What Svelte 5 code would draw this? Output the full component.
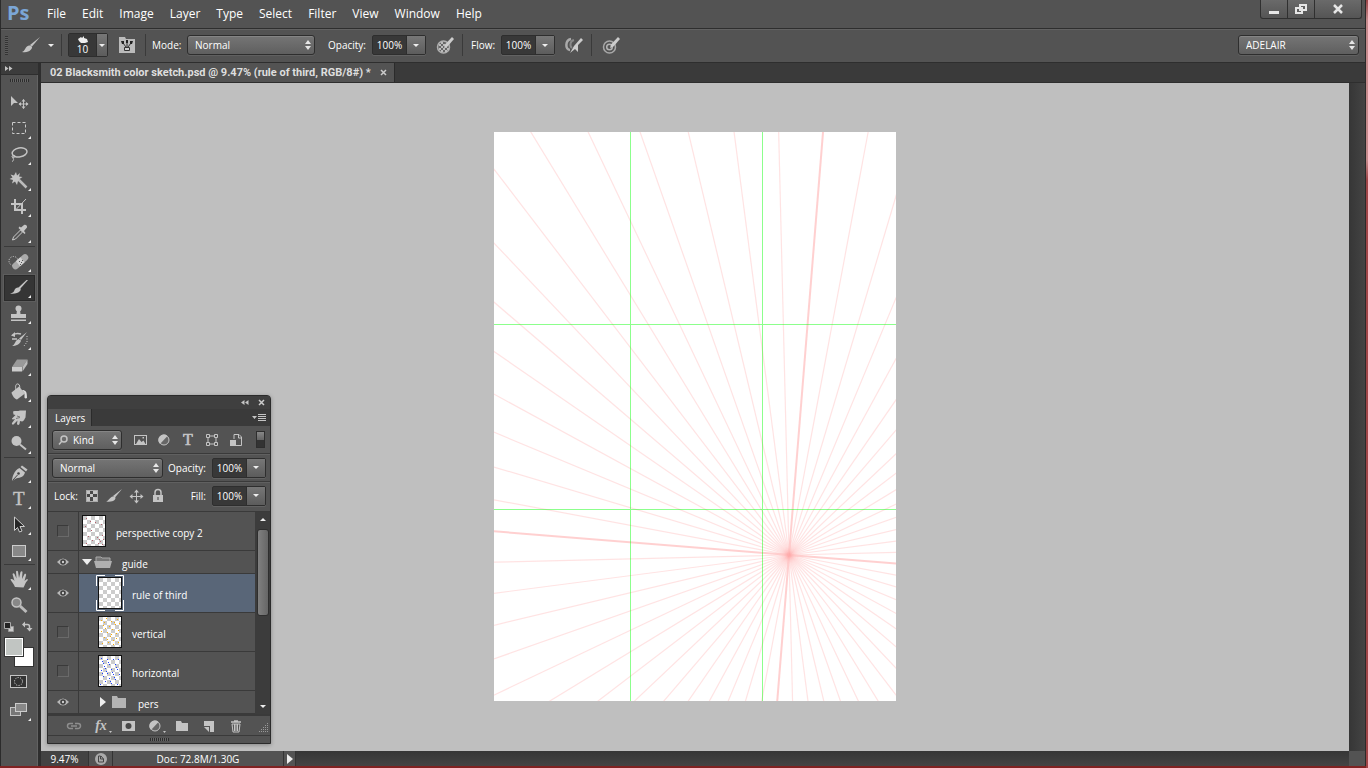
<script>
const menus = ['File', 'Edit', 'Image', 'Layer', 'Type', 'Select', 'Filter', 'View', 'Window', 'Help'];

// each drawing lives in a 31 x 26 cell, x runs from 4 to 35
const toolGroups = [
    [
        { name: 'Move', single: true, art: '<path d="M11 6v10l3-3h4z"/><path d="M23.500 9.500v9M19 14h9" stroke="#c4c4c4"/><path d="M23.500 9l2 2.500h-4zM23.500 19l2-2.500h-4zM18.500 14l2.500-2v4zM28.500 14l-2.500-2v4z"/>' },
        { name: 'Marquee', art: '<rect x="12.500" y="6.500" width="13" height="11" fill="none" stroke="#ccc" stroke-dasharray="3 2"/>' },
        { name: 'Lasso', art: '<ellipse cx="19.500" cy="10.500" rx="7.500" ry="4.500" transform="rotate(-10 19 10)" fill="none" stroke="#c4c4c4" stroke-width="1.500"/><path d="M12.500 13.500c-2 2 2 3 2.500 1s-3-1-2 1.500 1 2-1 3.500" fill="none" stroke="#c4c4c4"/>' },
        { name: 'Magic wand', art: '<path d="M16 4l1 3.500L20 5l-1 3.500 3.500.500-3 2 2 3-3.500-1L17 17l-2-3.500-3 2 1-3.500-3.500-1 3-1.500-2-3 3.500 1z"/><path d="M19 12l7.500 7.500" stroke="#bbb" stroke-width="2.500"/>' },
        { name: 'Crop', art: '<path d="M15 5v11h11M11 10h11v10" fill="none" stroke="#c4c4c4" stroke-width="2"/><path d="M16 15.500L26 5" stroke="#c4c4c4"/>' },
        { name: 'Eyedropper', art: '<path d="M12.500 20l1-3 7-7 2 2-7 7z" fill="#555" stroke="#ccc"/><path d="M18.500 8l6 6 1-1-1.500-2 3-3.500c.5-2-1.500-3.500-3-2.500l-3 2.500-1.500-1z"/>' }
    ],
    [
        { name: 'Healing brush', art: '<circle cx="13.500" cy="12" r="4.500" fill="none" stroke="#ddd" stroke-dasharray="1 1.500"/><path d="M15.500 17L25 8.500" stroke="#aaa" stroke-width="6.500" stroke-linecap="round"/><path d="M18 14.800l4.500-4" stroke="#d2d2d2" stroke-width="6.500"/><path d="M19 12h1v1h-1zM21 13h1v1h-1zM20 15h1v1h-1zM22 11h1v1h-1z" fill="#555"/>' },
        { name: 'Brush', active: true, art: '<path d="M28 5l-8 9-1.500-1.500 8-7.500z"/><path d="M18 12.500c2.500 0 3.500 2 2 3.500-2 2.500-6 3-10 2.500 3-.5 4-1.500 4.500-3.500.500-1.500 2-2.500 3.500-2.500z"/>' },
        { name: 'Clone stamp', art: '<circle cx="18.500" cy="7.500" r="3"/><path d="M17 9h3l.500 4h5.500v4H11v-4h5.500zM11 18.500h15v1.500H11z"/>' },
        { name: 'History brush', art: '<path d="M27 5l-6 8-2-1.500zM18.500 12l2.500 1.500c-1 4-5 5.500-9 5.500 3-1 3-5.500 6.500-7z"/><path d="M13 8c2.500-2 5-2 8-1M12 12h5" fill="none" stroke="#c4c4c4" stroke-width="1.500"/><path d="M11 8.500l4-3.500v5z"/><path d="M27 9v6l-3 4" fill="none" stroke="#ccc" stroke-dasharray="1 1.500"/>' },
        { name: 'Eraser', art: '<path d="M12 14l5-7.500h10.500L22.500 14z" fill="#999"/><path d="M12 14h10v4.500H12z" fill="#ccc"/><path d="M22.500 14l5-7.500V11l-5 7.500z" fill="#bbb"/>' },
        { name: 'Paint bucket', art: '<path d="M11.500 13.500l7.500-6 6 7-8 6c-2 0-5-4-5.500-7z"/><path d="M16 11c-1-4 0-6.500 2-6s2 3 1.500 6" fill="none" stroke="#ccc"/><path d="M22 11c4 0 5 2 5 8-1.500 1-3 0-2.500-1.500V14z" fill="#ddd"/>' },
        { name: 'Smudge', art: '<path d="M13 6.500c2-1 5 0 7-1h6l-.5 7c-1 1-1 3.500-3.500 4l-2-.5-.5 3c-1 1.500-2.500 1-2.500-.5l.5-3-4 4c-1 .500-2-.5-1.500-1.500l3-4-2 .500c-1 0-1.500-1-.5-1.500l3-3-2-.5z"/><path d="M17 11l3 1M16 13.500l4-1" stroke="#777"/>' },
        { name: 'Dodge', art: '<circle cx="16.500" cy="10" r="5"/><path d="M20 13.500l6 5" stroke="#c4c4c4" stroke-width="2"/>' }
    ],
    [
        { name: 'Pen', art: '<path d="M22 5.500l5.500 4-1.500 2-5.500-4.500zM19.500 8l5.500 4.500c-1 4-4 5-9 6l-4 2.500c0-3 2-11 7.500-13z"/><path d="M12.500 20.500l5-5.500" stroke="#444"/><circle cx="18.500" cy="13.500" r="1.300" fill="#444"/>' },
        { name: 'Type', art: '<text x="13" y="19" font-family="Liberation Serif, serif" font-size="19" stroke="#c4c4c4" stroke-width=".4">T</text>' },
        { name: 'Path selection', art: '<path d="M14.500 5v13.500l3-3 2 4.500 2.500-1-2-4.500h4.500z" fill="#252525" stroke="#ccc"/>' },
        { name: 'Rectangle', art: '<rect x="12.500" y="7.500" width="13" height="11" fill="#888" stroke="#ccc"/>' }
    ],
    [
        { name: 'Hand', art: '<path d="M15 20c-1-3-3.500-5-4.500-7.500 1-1 3 0 4 1.500l-2-7c.5-1 1.500-1 2 0l2 4.500-.500-7c.500-1 1.500-1 2 0l1 6.500L20.500 5c.500-1 2-1 2 0L22 12l2.500-5c1-.500 2 0 1.500 1.500L24.500 14l2.500-2c1 0 1 1 .5 1.500C25 16 25 18 23.500 20.500z"/>' },
        { name: 'Zoom', single: true, art: '<circle cx="16.500" cy="9.500" r="4.500" fill="#888" stroke="#c4c4c4" stroke-width="1.500"/><path d="M20 13l6.500 6" stroke="#bbb" stroke-width="3"/>' }
    ]
];

// drawn on a 16 x 16 grid
const icons = {
    image: '<rect x="2.500" y="3.500" width="12" height="9" fill="none" stroke="#c4c4c4"/><path d="M4 12l3-5 2.500 3 2-1.500 2 3.500z"/><rect x="10.500" y="5" width="1.500" height="1.500"/>',
    adjust: '<circle cx="8" cy="8" r="5" fill="#666" stroke="#c4c4c4"/><path d="M4 12A5 5 0 0 1 11.500 4z"/>',
    type: '<text x="3" y="13" font-family="Liberation Serif, serif" font-size="16" stroke="#c4c4c4" stroke-width=".6">T</text>',
    shape: '<path d="M4 4h8v8H4z" fill="none" stroke="#c4c4c4"/><path d="M2.500 2.500h3v3h-3zM10.500 2.500h3v3h-3zM2.500 10.500h3v3h-3zM10.500 10.500h3v3h-3z" fill="#535353" stroke="#c4c4c4"/>',
    smart: '<path d="M6 7V2.500h5l2.500 2.500v8.500H8M10.500 3v3h3" fill="none" stroke="#c4c4c4"/><path d="M2 8h6v6H2z"/>',
    grid: '<path d="M2 2h12v12H2z" fill="#aaa"/><path d="M6 3h3v3H6zM3 6h3v3H3zM9 6h4v3H9zM6 9h3v4H6z" fill="#484848"/><path d="M3 3h3v3H3zM9 3h4v3H9zM6 6h3v3H6zM3 9h3v4H3zM9 9h4v4H9z"/>',
    brush: '<path d="M16 1L9 9.500 7 8z"/><path d="M7 8.500c3 0 3 2 1.500 3.500C7 13.500 4 14 0 13.500c3-.500 3.500-4.500 7-5z"/>',
    move: '<path d="M8.500 3v11M3 8.500h11" stroke="#c4c4c4"/><path d="M8.500 1.500l2.500 3H6zM8.500 15.500l2.500-3H6zM1.500 8.500l3-2.500v5zM15.500 8.500l-3-2.500v5z"/>',
    lock: '<path d="M5 7V4.500a3 3 0 0 1 6 0V7" fill="none" stroke="#c4c4c4" stroke-width="1.500"/><path d="M3 7h10v7H3z"/><path d="M7.500 9h1v3h-1z" fill="#444"/>',
    link: '<path d="M7 10.500H4a2.500 2.500 0 0 1 0-5h3M9 5.500h3a2.500 2.500 0 0 1 0 5H9M5 8h6" fill="none" stroke="#8e8e8e" stroke-width="1.500"/>',
    mask: '<path d="M2 3h13v10H2z"/><circle cx="8.500" cy="8" r="3" fill="#484848"/>',
    folder: '<path d="M2 3h5l1 2h6v8H2z"/>',
    sheet: '<path d="M3 3h10v11H9V8H3z"/><path d="M3 9h5v5z"/>',
    trash: '<path d="M3 4h10M6 3h4" stroke="#c4c4c4" stroke-width="1.500"/><path d="M4 6h8l-1 8H5z" fill="none" stroke="#c4c4c4"/><path d="M6.500 6v7M8 6v7M9.500 6v7" stroke="#c4c4c4"/>',
    brushPanel: '<path d="M0 0h6l1 2h9v14H0z" fill="#bbb"/><path d="M5.500 10.500h5v3h-5z" fill="#ccc" stroke="#333"/><path d="M4 6l3 4M8 5v5M12 6l-3 4" stroke="#333"/><path d="M2 4h3v3H3zM7 3h2v3H7zM11 4h3l-1 3h-2z" fill="#222"/>'
};

// pen overlays of the options bar, 18 x 17
const pens = {
    opacity: '<circle cx="7.500" cy="10" r="6" fill="#666" stroke="#b0b0b0" stroke-width="1.500"/><path d="M5 5h2v2H5zM3 7h2v2H3zM7 7h2v2H7zM5 9h2v2H5zM9 9h2v2H9zM3 11h2v2H3zM7 11h2v2H7zM11 11h2v2h-2zM5 13h2v2H5zM9 13h2v2H9z" fill="#bbb"/><path d="M16 0l2 2-6.500 7.500L8 11l1-3.500z" fill="#ccc"/>',
    airbrush: '<path d="M6 2C0 3 0 13 5 13" fill="none" stroke="#aaa" stroke-width="2.500"/><path d="M9 3C5 4 4.500 9 7 11" fill="none" stroke="#888" stroke-width="2"/><path d="M16 1l2 2-5 5v7l-3-3-5 4 4-7z" fill="#ccc"/>',
    size: '<circle cx="7.500" cy="10" r="6" fill="none" stroke="#a8a8a8" stroke-width="1.500"/><circle cx="7.500" cy="10" r="2.800" fill="none" stroke="#b4b4b4" stroke-width="1.500"/><path d="M16 0l2 2-6.500 7.500L8 11l1-3.500z" fill="#ccc"/>'
};

const filters = [
    ['image', 'Pixel layers'],
    ['adjust', 'Adjustment layers'],
    ['type', 'Type layers'],
    ['shape', 'Shape layers'],
    ['smart', 'Smart objects']
];
const locks = [
    ['grid', 'Lock transparent pixels'],
    ['brush', 'Lock image pixels'],
    ['move', 'Lock position'],
    ['lock', 'Lock all']
];
const actions = [
    ['link', 'Link layers'],
    ['fx', 'Layer style'],
    ['mask', 'Add mask'],
    ['adjust', 'New adjustment layer'],
    ['folder', 'New group'],
    ['sheet', 'New layer'],
    ['trash', 'Delete layer']
];

let layers = [
    { name: 'perspective copy 2', visible: false, dots: '#b5606c', pts: [[3, 2], [7, 5], [2, 10], [12, 6], [18, 8], [8, 14], [5, 20], [14, 21], [16, 23], [19, 19], [17, 25], [15, 27], [20, 23], [3, 27], [9, 24], [19, 28]] },
    { name: 'guide', visible: true, group: true, open: true },
    { name: 'rule of third', visible: true, child: true, selected: true, pts: [] },
    { name: 'vertical', visible: false, child: true, dots: '#ffae00', pts: [[2, 3], [7, 1], [12, 4], [18, 2], [4, 8], [10, 9], [16, 7], [2, 14], [8, 15], [13, 12], [19, 13], [5, 20], [11, 19], [17, 21], [3, 26], [9, 25], [14, 27], [19, 25], [5, 5], [15, 5], [20, 6], [6, 11], [12, 17], [17, 16], [8, 22], [14, 23]] },
    { name: 'horizontal', visible: false, child: true, dots: '#1c3fff', pts: [[2, 2], [4, 7], [6, 12], [8, 17], [10, 22], [12, 27], [8, 3], [10, 8], [12, 13], [14, 18], [16, 23], [18, 28], [14, 3], [16, 8], [18, 13], [20, 18], [2, 14], [4, 20], [6, 25], [1, 28], [19, 3], [3, 5], [5, 10], [9, 6], [13, 16], [17, 11], [7, 15], [15, 21], [11, 25], [3, 17]] },
    { name: 'pers', visible: true, child: true, group: true }
];

// one ray every 6 degrees around the vanishing point
const vx = 295;
const vy = 423;
const rays = Array.from({ length: 60 }, (_, i) => {
    const a = (4.6 + i * 6) * Math.PI / 180;
    return { x: vx + 800 * Math.sin(a), y: vy - 800 * Math.cos(a), strong: i % 15 === 0 };
});
</script>

{#snippet icon(name)}
    <svg class="icon" viewBox="0 0 16 16" aria-hidden="true">{@html icons[name]}</svg>
{/snippet}

{#snippet pen(name)}
    <svg class="pen" viewBox="0 0 18 17" aria-hidden="true">{@html pens[name]}</svg>
{/snippet}

{#snippet updown()}
    <svg class="updown" viewBox="0 0 6 10" aria-hidden="true"><path d="M0 4l3-4 3 4zM0 6h6l-3 4z"/></svg>
{/snippet}

{#snippet percent(label)}
    <span class="percent">
        <input type="text" value="100%" aria-label={label}>
        <button aria-label="{label} slider"><svg class="down" viewBox="0 0 6 3"><path d="M0 0h6L3 3z"/></svg></button>
    </span>
{/snippet}

<div class="frame">
<div class="window">
    <header>
        <span class="logo">Ps</span>
        <nav>
            {#each menus as menu}
                <button>{menu}</button>
            {/each}
        </nav>
        <div class="controls">
            <button aria-label="Minimize"><svg viewBox="0 0 12 12"><path d="M1 8h10v3H1z"/></svg></button>
            <button aria-label="Restore"><svg viewBox="0 0 12 12"><path d="M5 2h6v5H5zM1 5h6v5H1z" fill="none" stroke="#e6e6e6" stroke-width="2"/></svg></button>
            <button class="close" aria-label="Close"><svg viewBox="0 0 12 12"><path d="M2 2l8 8M10 2l-8 8" stroke="#e6e6e6" stroke-width="2.500"/></svg></button>
        </div>
    </header>

    <div class="options">
        <i class="grip"></i>
        <button class="current" aria-label="Tool preset">
            <svg class="big" viewBox="0 0 18 16"><path d="M18 0l-8 9.500L8 8z"/><path d="M7 8.500c3 0 4 2 2 4C7 15 4 15.500 0 15c3-.500 3-5.500 7-6.500z"/></svg>
            <svg class="down" viewBox="0 0 6 3"><path d="M0 0h6L3 3z"/></svg>
        </button>
        <i class="rule"></i>
        <button class="preset" aria-label="Brush preset">
            <span>
                <svg viewBox="0 0 10 7"><path d="M0 3l3-2 1 1 2-2v2l3 1 1 3-3 1H3L1 5z"/></svg>
                10
            </span>
            <b><svg class="down" viewBox="0 0 6 3"><path d="M0 0h6L3 3z"/></svg></b>
        </button>
        <button class="tip panel" aria-label="Brush panel">{@render icon('brushPanel')}</button>
        <i class="rule"></i>
        <label class="mode">Mode:
            <span class="pick"><select><option>Normal</option></select>{@render updown()}</span>
        </label>
        <span class="caption wide">Opacity:</span>
        {@render percent('Opacity')}
        <button class="tip" aria-label="Pressure for opacity">{@render pen('opacity')}</button>
        <i class="rule"></i>
        <span class="caption">Flow:</span>
        {@render percent('Flow')}
        <button class="tip" aria-label="Airbrush">{@render pen('airbrush')}</button>
        <i class="rule"></i>
        <button class="tip" aria-label="Pressure for size">{@render pen('size')}</button>
        <span class="pick workspace"><select aria-label="Workspace"><option>ADELAIR</option></select>{@render updown()}</span>
    </div>

    <div class="body">
        <aside class="tools">
            <button class="expand" aria-label="Expand tools"><svg viewBox="0 0 8 5"><path d="M0 0l3.500 2.500L0 5zM4 0l3.500 2.500L4 5z"/></svg></button>
            <i class="dots"></i>
            {#each toolGroups as group}
                <div class="group">
                    {#each group as tool}
                        <button class="tool" class:active={tool.active} aria-label={tool.name}>
                            <svg viewBox="4 0 31 26">
                                {@html tool.art}
                                {#if !tool.single}<path d="M31 20v3h-3z" fill="#eee"/>{/if}
                            </svg>
                        </button>
                    {/each}
                </div>
            {/each}
            <svg class="swatches" viewBox="4 0 31 48" aria-label="Foreground and background colors">
                <path d="M8.500 7.500h5v5h-5z" fill="#ccc" stroke="#999"/>
                <path d="M4.500 3.500h6v6h-6z" fill="#222" stroke="#aaa"/>
                <path d="M24 5.500h3.500q2 0 2 2V10" fill="none" stroke="#c4c4c4" stroke-width="1.500"/>
                <path d="M25 2.500v6L22 5.500zM26.500 9h6l-3 3.500z"/>
                <path d="M14 28h20v20H14z" fill="#333"/>
                <path d="M15 29h18v18H15z" fill="#fff"/>
                <path d="M4 18h20v20H4z" fill="#333"/>
                <path d="M5 19h18v18H5z" fill="#fff"/>
                <path d="M6 20h16v16H6z" fill="#c1c5c2"/>
            </svg>
            <button class="tool" aria-label="Quick mask">
                <svg viewBox="4 0 31 26"><rect x="10.500" y="5.500" width="16" height="12" fill="#333" stroke="#c4c4c4"/><circle cx="18.500" cy="11.500" r="4" fill="none" stroke="#eee" stroke-dasharray="1 1.500"/></svg>
            </button>
            <button class="tool" aria-label="Screen mode">
                <svg viewBox="4 0 31 26"><rect x="10.500" y="8.500" width="10" height="8" fill="#777" stroke="#c4c4c4"/><rect x="15.500" y="4.500" width="11" height="8" fill="#888" stroke="#ccc"/><path d="M31 19v3h-3z" fill="#eee"/></svg>
            </button>
        </aside>

        <main>
            <div class="tabs">
                <div class="tab">
                    <span>02 Blacksmith color sketch.psd @ 9.47% (rule of third, RGB/8#) *</span>
                    <button aria-label="Close document"><svg viewBox="0 0 7 7"><path d="M1 1l5 5M6 1L1 6" stroke="#ccc" stroke-width="1.500"/></svg></button>
                </div>
            </div>

            <div class="stage">
                <div class="pasteboard">
                    <svg class="page" viewBox="0 0 402 569">
                        <g stroke="#ffb0b0">
                            {#each rays as ray}
                                <line x1={vx} y1={vy} x2={ray.x} y2={ray.y} stroke-opacity={ray.strong ? 0.6 : 0.35} stroke-width={ray.strong ? 2 : 1.2}/>
                            {/each}
                        </g>
                        <path d="M136.500 0v569M268.500 0v569M0 192.500h402M0 377.500h402" fill="none" stroke="#00ff00" stroke-opacity=".45" shape-rendering="crispEdges"/>
                    </svg>
                </div>
                <div class="vscroll"></div>

                <section class="layers">
                    <div class="titlebar">
                        <button aria-label="Collapse panel"><svg viewBox="0 0 8 5"><path d="M3.500 0v5L0 2.500zM7.500 0v5L4 2.500z"/></svg></button>
                        <button aria-label="Close panel"><svg class="x" viewBox="0 0 7 7"><path d="M1 1l5 5M6 1L1 6" stroke="#ccc" stroke-width="1.500"/></svg></button>
                    </div>
                    <div class="panel-tabs">
                        <h2>Layers</h2>
                        <button aria-label="Panel menu"><svg viewBox="0 0 14 8"><path d="M0 2h5L2.500 5zM6 0h8v1H6zM6 2h8v1H6zM6 4h8v1H6zM6 6h8v1H6z"/></svg></button>
                    </div>
                    <div class="row filter">
                        <span class="pick kind">
                            <svg class="glass" viewBox="0 0 10 10"><circle cx="6" cy="4" r="3" fill="none" stroke="#c4c4c4" stroke-width="1.500"/><path d="M4 6L1 9.500" stroke="#c4c4c4" stroke-width="1.500"/></svg>
                            <select aria-label="Filter type"><option>Kind</option></select>{@render updown()}
                        </span>
                        <div class="set">
                            {#each filters as [name, label]}
                                <button aria-label={label}>{@render icon(name)}</button>
                            {/each}
                        </div>
                        <button class="switch" aria-label="Layer filtering"></button>
                    </div>
                    <div class="row">
                        <span class="pick blend"><select aria-label="Blend mode"><option>Normal</option></select>{@render updown()}</span>
                        <span class="caption right">Opacity:</span>
                        {@render percent('Layer opacity')}
                    </div>
                    <div class="row lock">
                        <span class="caption">Lock:</span>
                        <div class="set">
                            {#each locks as [name, label]}
                                <button aria-label={label}>{@render icon(name)}</button>
                            {/each}
                        </div>
                        <span class="caption right">Fill:</span>
                        {@render percent('Layer fill')}
                    </div>

                    <div class="list">
                        <ul>
                            {#each layers as layer}
                                <li class:short={layer.group} class:selected={layer.selected}>
                                    <label class="eye">
                                        <input type="checkbox" bind:checked={layer.visible} aria-label="Show {layer.name}">
                                        {#if layer.visible}
                                            <svg viewBox="0 0 12 8"><path d="M0 4Q6-3 12 4 6 11 0 4z" fill="#b8b8b8"/><circle cx="6" cy="4" r="2.800" fill="#3d3d3d"/><circle cx="6" cy="4" r="1.200" fill="#ccc"/></svg>
                                        {/if}
                                    </label>
                                    <div class="entry" class:child={layer.child}>
                                        {#if layer.group}
                                            <button class="fold" aria-label="Toggle {layer.name}">
                                                {#if layer.open}
                                                    <svg viewBox="0 0 10 10"><path d="M0 2h10L5 8z" fill="#eee"/></svg>
                                                {:else}
                                                    <svg viewBox="0 0 10 10"><path d="M2 0l6 5-6 5z" fill="#eee"/></svg>
                                                {/if}
                                            </button>
                                            {#if layer.open}
                                                <svg class="folder" viewBox="0 0 18 12"><path d="M2 5V1h5l1 1h8v3" fill="#777" stroke="#aaa"/><path d="M0 5h18l-2 7H2z" fill="#b0b0b0"/></svg>
                                            {:else}
                                                <svg class="folder" viewBox="0 0 18 12"><path d="M2 0h5l1 2h8v10H2z" fill="#b4b4b4"/></svg>
                                            {/if}
                                        {:else}
                                            <div class="thumb">
                                                <svg viewBox="0 0 22 30">
                                                    {#each layer.pts as [x, y]}
                                                        <rect {x} {y} width="1" height="1" fill={layer.dots}/>
                                                    {/each}
                                                </svg>
                                                {#if layer.selected}
                                                    <svg class="brackets" viewBox="0 0 28 36"><path d="M9 .5H.5V11M19 .5h8.500V11M9 35.500H.5V25M19 35.500h8.500V25" fill="none" stroke="#fff"/></svg>
                                                {/if}
                                            </div>
                                        {/if}
                                        <span>{layer.name}</span>
                                    </div>
                                </li>
                            {/each}
                        </ul>
                        <div class="scroll">
                            <svg class="down" viewBox="0 0 6 3"><path d="M0 3h6L3 0z"/></svg>
                            <i></i>
                            <svg class="down" viewBox="0 0 6 3"><path d="M0 0h6L3 3z"/></svg>
                        </div>
                    </div>

                    <div class="actions">
                        {#each actions as [name, label]}
                            <button aria-label={label}>
                                {#if name === 'fx'}
                                    <em>fx</em>
                                {:else}
                                    {@render icon(name)}
                                {/if}
                                {#if name === 'fx' || name === 'adjust'}<svg class="more" viewBox="0 0 3 2"><path d="M0 0h3L1.500 2z"/></svg>{/if}
                            </button>
                        {/each}
                        <svg class="corner" viewBox="0 0 10 10"><path d="M9.500 0v10M7.500 2v8M5.500 4v6M3.500 6v4M1.500 8v2" stroke="#999" stroke-dasharray="1 1"/></svg>
                    </div>
                    <div class="foot"><i class="dots"></i></div>
                </section>
            </div>

            <footer>
                <input type="text" value="9.47%" aria-label="Zoom level">
                <button class="share" aria-label="Share"><svg viewBox="0 0 12 12"><circle cx="6" cy="6" r="6" fill="#aaa"/><path d="M3.500 3v6h5V6M3.500 3h2v3h3L6 3" fill="none" stroke="#444"/></svg></button>
                <div class="doc">Doc: 72.8M/1.30G</div>
                <button class="play" aria-label="Status options"><svg viewBox="0 0 6 10"><path d="M0 0l6 5-6 5z" fill="#eee"/></svg></button>
                <div class="hscroll"></div>
                <i class="sizebox"></i>
            </footer>
        </main>
    </div>
</div>
</div>

<style>
:global(body) {
    background: #8b2525;
    overflow: hidden;
}

.frame {
    box-sizing: border-box;
    height: 100vh;
    padding: 0 2px 2px 0;
    background: linear-gradient(#9c4448, #c78b8d 20px, #c78b8d 160px, #a04548 180px) right top / 2px 100% no-repeat, #802222;
    font: 10px/14px "Open Sans", "Noto Sans", sans-serif;
    color: #fff;
}

.window {
    box-sizing: border-box;
    height: 100%;
    display: flex;
    flex-direction: column;
    background: #535353;
    border-left: 1px solid #2b2b2b;
    border-right: 1px solid #2b2b2b;
}

button, input, select {
    font: inherit;
    color: inherit;
    border: 0;
    padding: 0;
    margin: 0;
    background: none;
    border-radius: 0;
}

button {
    display: flex;
    align-items: center;
    justify-content: center;
}

svg {
    display: block;
    fill: #c4c4c4;
    flex: none;
}

i {
    flex: none;
}

/* menu bar */
header {
    height: 28px;
    flex: none;
    display: flex;
    border-bottom: 1px solid #2e2e2e;
}

.logo {
    width: 38px;
    padding-left: 6px;
    box-sizing: border-box;
    font: bold 20px/26px "Open Sans", sans-serif;
    color: #7ba6d6;
}

nav {
    display: flex;
    align-items: center;
    gap: 16px;
    padding-left: 8px;
    font-size: 12px;
    flex: 1;
}

.controls {
    display: flex;
    height: 18px;
    margin-right: 3px;
    border: 1px solid #303030;
    border-top: 0;
    border-radius: 0 0 3px 3px;
    background: linear-gradient(#6a6a6a, #555);
}

.controls button {
    width: 27px;
    border-right: 1px solid #303030;
}

.controls .close {
    width: 46px;
    border: 0;
}

.controls svg {
    width: 12px;
    fill: #e6e6e6;
}

/* options bar */
.options {
    height: 30px;
    padding-bottom: 2px;
    flex: none;
    display: flex;
    align-items: center;
    border-top: 1px solid #626262;
    border-bottom: 1px solid #2e2e2e;
}

.grip {
    width: 3px;
    height: 19px;
    margin-left: 4px;
    background: repeating-linear-gradient(#333 0 1px, #5c5c5c 1px 2px);
}

.current {
    margin: 0 7px 0 14px;
    gap: 8px;
}

.big {
    width: 18px;
}

.down {
    width: 6px;
    fill: #eee;
}

.rule {
    width: 1px;
    height: 22px;
    background: #3a3a3a;
}

.preset {
    height: 24px;
    margin-left: 6px;
    border: 1px solid #2e2e2e;
    border-radius: 2px;
    align-items: stretch;
}

.preset span {
    width: 27px;
    background: #383838;
    display: flex;
    flex-direction: column;
    align-items: center;
    line-height: 12px;
}

.preset span svg {
    width: 10px;
    margin-top: 2px;
    fill: #eee;
}

.preset b {
    width: 10px;
    display: flex;
    align-items: center;
    justify-content: center;
    border-left: 1px solid #2e2e2e;
    background: linear-gradient(#777, #5c5c5c);
}

.tip {
    margin: 0 8px 0 10px;
}

.tip.panel {
    margin: 0 10px 0 11px;
}

.pen {
    width: 18px;
}

.icon {
    width: 16px;
    height: 16px;
}

.mode {
    display: flex;
    align-items: center;
    justify-content: space-between;
    width: 163px;
    margin: 0 13px 0 6px;
}

.pick {
    position: relative;
    display: block;
    width: 128px;
    height: 20px;
}

.pick select {
    appearance: none;
    box-sizing: border-box;
    width: 100%;
    height: 100%;
    padding: 0 16px 0 7px;
    border: 1px solid #2e2e2e;
    border-radius: 3px;
    background: linear-gradient(#757575, #5f5f5f);
    box-shadow: inset 0 1px #858585, 0 1px #606060;
}

.updown {
    position: absolute;
    right: 4px;
    top: 5px;
    width: 6px;
    fill: #e6e6e6;
    pointer-events: none;
}

.caption {
    width: 30px;
}

.caption.wide {
    width: 44px;
}

.percent {
    display: flex;
    box-sizing: border-box;
    width: 54px;
    height: 20px;
    border: 1px solid #2e2e2e;
    border-radius: 2px;
    background: #383838;
    box-shadow: 0 1px #626262;
}

.percent input {
    width: 33px;
    min-width: 0;
    text-align: center;
}

.percent button {
    flex: 1;
    border-left: 1px solid #2e2e2e;
    background: linear-gradient(#777, #5c5c5c);
}

.options .caption:not(.wide) {
    margin-left: 8px;
}

.workspace {
    width: 121px;
    margin: 0 6px 0 auto;
}

/* tool strip */
.body {
    flex: 1;
    display: flex;
    min-height: 0;
}

.tools {
    width: 37px;
    border-right: 3px solid #2e2e2e;
    box-shadow: inset -1px 0 #626262;
    flex: none;
}

.expand {
    width: 37px;
    height: 12px;
    padding-left: 4px;
    justify-content: flex-start;
    background: #3c3c3c;
    border-bottom: 1px solid #2e2e2e;
}

.expand svg {
    width: 8px;
}

.dots {
    display: block;
    width: 19px;
    height: 3px;
    margin: 4px auto 8px;
    background: repeating-linear-gradient(90deg, #2c2c2c 0 1px, #666 1px 2px);
}

.group {
    margin: 0 3px 2px;
    border-bottom: 1px solid #3a3a3a;
}

.group:nth-last-of-type(1) {
    border: 0;
    margin-bottom: 0;
}

.tool {
    width: 31px;
    height: 26px;
}

.tool svg {
    width: 31px;
}

.tool.active {
    background: #353535;
    box-shadow: inset 0 0 0 1px #2a2a2a, 0 0 0 1px #5d5d5d;
}

.swatches {
    width: 31px;
    margin-left: 3px;
}

.swatches ~ .tool {
    margin: 3px 3px 0;
}

/* document */
main {
    flex: 1;
    min-width: 0;
    display: flex;
    flex-direction: column;
}

.tabs {
    height: 19px;
    flex: none;
    display: flex;
    background: #3a3a3a;
    border-bottom: 1px solid #2e2e2e;
}

.tab {
    display: flex;
    align-items: center;
    gap: 9px;
    padding: 0 7px 0 9px;
    background: #535353;
    border-right: 1px solid #2b2b2b;
    font: bold 11px/14px Roboto, "Open Sans", sans-serif;
    color: #dedede;
}

.tab svg {
    width: 7px;
}

.stage {
    flex: 1;
    min-height: 0;
    display: flex;
    position: relative;
}

.pasteboard {
    flex: 1;
    display: flex;
    align-items: center;
    justify-content: center;
    padding-bottom: 2px;
    background: #bfbfbf;
}

.page {
    width: 402px;
    background: #fff;
}

.vscroll {
    width: 16px;
    background: linear-gradient(90deg, #363636, #444);
}

footer {
    height: 15px;
    flex: none;
    display: flex;
    align-items: stretch;
    background: #535353;
}

footer input {
    width: 48px;
    text-align: center;
    background: #434343;
    border-right: 1px solid #333;
    box-sizing: border-box;
}

.share {
    width: 24px;
    border-right: 1px solid #333;
    box-sizing: border-box;
}

.share svg {
    width: 12px;
}

.doc {
    width: 170px;
    text-align: center;
    line-height: 16px;
}

.play {
    width: 13px;
    border: solid #333;
    border-width: 0 1px;
    box-sizing: border-box;
}

.play svg {
    width: 6px;
}

.hscroll {
    flex: 1;
    background: linear-gradient(#363636, #444);
}

.sizebox {
    width: 16px;
}

/* layers panel floats over the document */
.layers {
    position: absolute;
    left: 6px;
    top: 312px;
    width: 222px;
    border: 1px solid #2b2b2b;
    border-radius: 4px 4px 0 0;
    background: #535353;
    box-shadow: 0 1px 4px rgba(0, 0, 0, 0.3);
}

.titlebar {
    display: flex;
    justify-content: flex-end;
    gap: 9px;
    height: 13px;
    padding-right: 5px;
    background: #3f3f3f;
    border-radius: 3px 3px 0 0;
}

.titlebar svg {
    width: 8px;
}

.titlebar .x {
    width: 7px;
}

.panel-tabs {
    display: flex;
    justify-content: space-between;
    height: 17px;
    background: #3a3a3a;
    padding-right: 4px;
}

.panel-tabs svg {
    width: 14px;
}

h2 {
    margin: 0;
    padding: 0 6px 0 7px;
    font: 10px/18px "Open Sans", "Noto Sans", sans-serif;
    background: #535353;
    border-right: 1px solid #2b2b2b;
}

.row {
    display: flex;
    align-items: center;
    box-sizing: border-box;
    height: 28px;
    padding: 0 4px;
    border-bottom: 1px solid #3a3a3a;
    box-shadow: 0 1px #606060;
}

.lock {
    height: 30px;
    padding: 0 4px 2px 6px;
    box-shadow: none;
}

.kind {
    width: 70px;
}

.kind select {
    padding-left: 20px;
}

.glass {
    position: absolute;
    left: 6px;
    top: 5px;
    width: 10px;
}

.set {
    display: flex;
    gap: 8px;
}

.filter .set {
    margin-left: 10px;
}

.lock .set {
    gap: 6px;
}

.switch {
    width: 9px;
    height: 17px;
    margin: 0 1px 0 auto;
    border: 1px solid #2e2e2e;
    background: linear-gradient(#888, #666 50%, #333 50%);
}

.blend {
    width: 111px;
}

.caption.right {
    width: auto;
    flex: 1;
    text-align: right;
    padding-right: 6px;
}

.list {
    display: flex;
    height: 202px;
    overflow: hidden;
}

ul {
    flex: 1;
    margin: 0;
    padding: 0;
    list-style: none;
}

li {
    display: flex;
    height: 38px;
    border-bottom: 1px solid #3a3a3a;
}

li.short {
    height: 22px;
}

.eye {
    width: 30px;
    display: flex;
    align-items: center;
    justify-content: center;
    border-right: 1px solid #3a3a3a;
}

.eye input {
    appearance: none;
    width: 12px;
    height: 12px;
    border: 1px solid #3a3a3a;
    border-right-color: #6a6a6a;
    border-bottom-color: #6a6a6a;
}

.eye input:checked {
    display: none;
}

.eye svg {
    width: 12px;
}

.entry {
    flex: 1;
    display: flex;
    align-items: center;
    padding-left: 3px;
}

.child {
    padding-left: 19px;
}

.selected .entry {
    background: #596678;
}

.entry span {
    margin-left: 10px;
    padding-top: 3px;
}

.thumb {
    position: relative;
    width: 22px;
    height: 30px;
    border: 1px solid #111;
    background: repeating-conic-gradient(#fff 0 25%, #ccc 0 50%) 0 0 / 8px 8px;
}

.brackets {
    position: absolute;
    left: -3px;
    top: -3px;
    width: 28px;
}

.fold {
    width: 10px;
    height: 10px;
}

.fold svg {
    width: 10px;
}

.folder {
    width: 18px;
    margin-left: 2px;
}

.scroll {
    width: 15px;
    display: flex;
    flex-direction: column;
    align-items: center;
    justify-content: space-between;
    padding: 6px 0;
    box-sizing: border-box;
    background: #3c3c3c;
}

.scroll i {
    width: 10px;
    height: 85px;
    margin: 8px 0 auto;
    border: 1px solid #2e2e2e;
    border-radius: 3px;
    background: linear-gradient(90deg, #808080, #666);
}

.actions {
    display: flex;
    align-items: center;
    gap: 11px;
    height: 19px;
    padding: 0 2px 0 18px;
    border-top: 2px solid #3a3a3a;
    border-bottom: 1px solid #3a3a3a;
}

.actions button {
    position: relative;
    width: 16px;
}

.actions em {
    font: italic bold 14px/16px "Liberation Serif", serif;
    color: #c4c4c4;
}

.more {
    position: absolute;
    right: -3px;
    bottom: 1px;
    width: 3px;
}

.corner {
    width: 10px;
    margin: 5px 0 0 auto;
}

.foot {
    height: 7px;
    overflow: hidden;
}

.foot .dots {
    margin: 2px auto 0;
}
</style>
